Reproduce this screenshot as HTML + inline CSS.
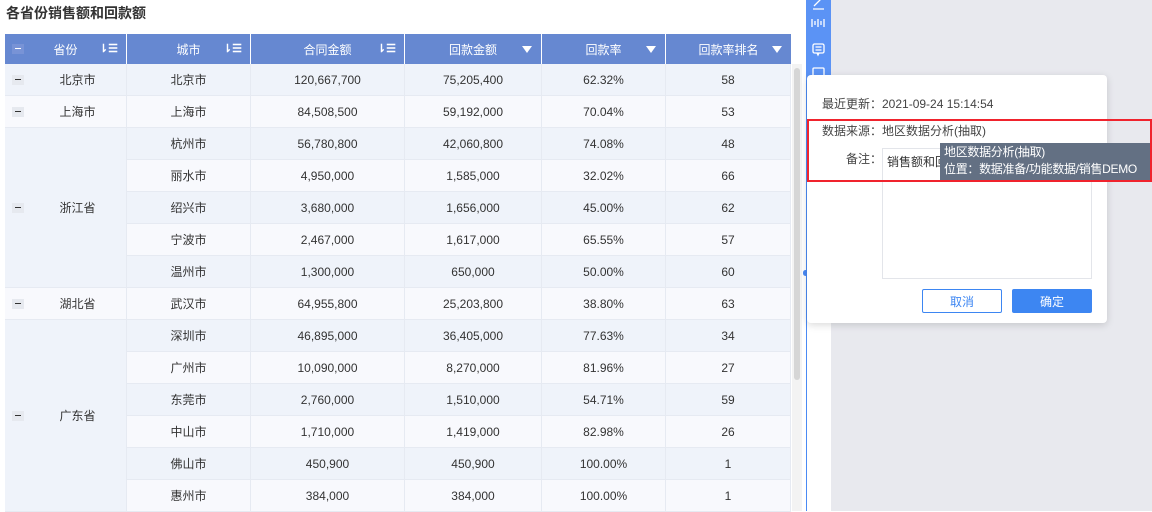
<!DOCTYPE html>
<html><head><meta charset="utf-8"><style>
*{margin:0;padding:0;box-sizing:border-box}
body{width:1152px;height:511px;overflow:hidden;background:#fff;font-family:"Liberation Sans","Noto Sans CJK SC",sans-serif;font-size:12px;color:#333;position:relative}
.a{position:absolute}
.title{left:6px;top:3px;font-size:14px;font-weight:bold;color:#333}
.hd{top:34px;height:30px;background:#6688d1;color:#fff;display:flex;align-items:center;justify-content:center;font-size:12px;border-right:1px solid #fff}
.c{height:32px;display:flex;align-items:center;justify-content:center;border-right:1px solid #e6eaf2;border-bottom:1px solid #e6eaf2;font-size:12px;color:#333}
.o{background:#eff3fa}.e{background:#f8f9fd}
.mi{position:absolute;left:7px;width:12px;height:10px;background:#e6e9ef}
.mi:after{content:"";position:absolute;left:3px;top:4px;width:6px;height:1px;background:#333}
.hmi{background:#7893d6}.hmi:after{background:#fff}
.tri{position:absolute;right:9px;top:12px;width:0;height:0;border-left:5px solid transparent;border-right:5px solid transparent;border-top:7px solid #fff}
.srt{position:absolute;right:8px;top:8px;font-size:11px;color:#fff;font-weight:bold}
</style></head><body>
<div class="a title">各省份销售额和回款额</div>

<div class="a hd" style="left:5px;width:122px">省份<div class="mi hmi" style="top:10px"></div><span class="srt">⇂☰</span></div>
<div class="a hd" style="left:127px;width:124px">城市<span class="srt">⇂☰</span></div>
<div class="a hd" style="left:251px;width:154px">合同金额<span class="srt">⇂☰</span></div>
<div class="a hd" style="left:405px;width:137px">回款金额<div class="tri"></div></div>
<div class="a hd" style="left:542px;width:124px">回款率<div class="tri"></div></div>
<div class="a hd" style="left:666px;width:125px;border-right:0">回款率排名<div class="tri"></div></div>

<div id="t"></div>
<script>
var rows=[["北京市","北京市","120,667,700","75,205,400","62.32%","58"],["上海市","上海市","84,508,500","59,192,000","70.04%","53"],["浙江省","杭州市","56,780,800","42,060,800","74.08%","48"],["","丽水市","4,950,000","1,585,000","32.02%","66"],["","绍兴市","3,680,000","1,656,000","45.00%","62"],["","宁波市","2,467,000","1,617,000","65.55%","57"],["","温州市","1,300,000","650,000","50.00%","60"],["湖北省","武汉市","64,955,800","25,203,800","38.80%","63"],["广东省","深圳市","46,895,000","36,405,000","77.63%","34"],["","广州市","10,090,000","8,270,000","81.96%","27"],["","东莞市","2,760,000","1,510,000","54.71%","59"],["","中山市","1,710,000","1,419,000","82.98%","26"],["","佛山市","450,900","450,900","100.00%","1"],["","惠州市","384,000","384,000","100.00%","1"]];
var span={0:1,1:1,2:5,7:1,8:6};
var xs=[5,127,251,405,542,666,791],h="";
rows.forEach(function(r,i){var y=64+i*32,cls=i%2==0?"o":"e";
 if(span[i]!==undefined){var n=span[i];h+='<div class="a c '+cls+'" style="left:5px;width:122px;top:'+y+'px;height:'+(n*32)+'px;padding-left:24px"><div class="mi" style="top:'+(n*16-5)+'px"></div>'+r[0]+'</div>';}
 for(var j=1;j<6;j++)h+='<div class="a c '+cls+'" style="left:'+xs[j]+'px;width:'+(xs[j+1]-xs[j])+'px;top:'+y+'px">'+r[j]+'</div>';
});
document.getElementById("t").innerHTML=h;
</script>
<div class="a" style="left:792px;top:64px;width:10px;height:447px;background:#f3f3f3"></div>
<div class="a" style="left:794px;top:68px;width:6px;height:312px;background:#d6d6d6;border-radius:3px"></div>

<div class="a" style="left:831px;top:0;width:321px;height:511px;background:#e8e9ee"></div>
<div class="a" style="left:806px;top:0;width:25px;height:511px;background:#fff;border-left:1px solid #4a8af4"></div>
<div class="a" style="left:806px;top:0;width:25px;height:80px;background:#5b93f5"></div>
<svg class="a" style="left:806px;top:0" width="25" height="80" fill="none" stroke="#fff" stroke-width="1.3">
<path d="M8 6 L16 -2 M7 9 L18 9"/>
<path d="M6 19v8M9 21v4M12 19v8M15 21v4M18 19v8"/>
<rect x="7" y="44" width="11" height="9" rx="1.5"/><path d="M9.5 47h6M9.5 50h6M11 53l1 2 1-2"/>
<rect x="7" y="68" width="11" height="8" rx="1"/>
</svg>
<div class="a" style="left:803px;top:270px;width:5px;height:6px;border-radius:3px;background:#4a8af4"></div>

<div class="a" style="left:807px;top:75px;width:300px;height:248px;background:#fff;border-radius:4px;box-shadow:0 2px 8px rgba(0,0,0,.15)"></div>
<div class="a" style="left:822px;top:95px;color:#444">最近更新：2021-09-24 15:14:54</div>
<div class="a" style="left:822px;top:122px;color:#444">数据来源：地区数据分析(抽取)</div>
<div class="a" style="left:846px;top:150px;color:#444">备注：</div>
<div class="a" style="left:882px;top:148px;width:210px;height:131px;border:1px solid #e3e5ea;background:#fff"></div>
<div class="a" style="left:887px;top:153px;color:#333">销售额和回</div>
<div class="a" style="left:922px;top:289px;width:80px;height:24px;border:1px solid #3d86f2;border-radius:2px;color:#3d86f2;display:flex;align-items:center;justify-content:center">取消</div>
<div class="a" style="left:1012px;top:289px;width:80px;height:24px;background:#3d86f2;border-radius:2px;color:#fff;display:flex;align-items:center;justify-content:center">确定</div>
<div class="a" style="left:940px;top:143px;width:211px;height:37px;background:#637083;color:#fff;font-size:12px;line-height:17px;padding:1px 4px;white-space:nowrap;letter-spacing:-0.3px">地区数据分析(抽取)<br>位置：数据准备/功能数据/销售DEMO</div>
<div class="a" style="left:807px;top:119px;width:345px;height:63px;border:2px solid #f0232d"></div>
</body></html>
